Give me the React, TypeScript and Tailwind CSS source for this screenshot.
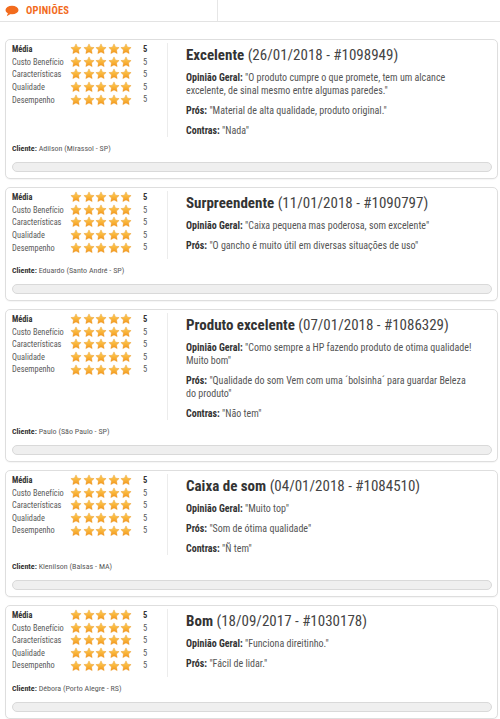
import React from "react";

const FONT = '"Liberation Sans Narrow", "Arial Narrow", "Roboto Condensed", "DejaVu Sans Condensed", "Liberation Sans", sans-serif';

function Star() {
  return (
    <svg width="12" height="12" viewBox="0 0 24 24" className="block">
      <defs>
        <linearGradient id="sg" x1="0" y1="0" x2="0" y2="1">
          <stop offset="0%" stopColor="#ffd45a" />
          <stop offset="100%" stopColor="#f3961c" />
        </linearGradient>
      </defs>
      <path
        d="M12 1.8l3.1 6.5 7.1.9-5.2 4.9 1.3 7.1L12 17.8l-6.3 3.4 1.3-7.1-5.2-4.9 7.1-.9z"
        fill="url(#sg)"
        stroke="#e8901a"
        strokeWidth="0.8"
        strokeLinejoin="round"
      />
    </svg>
  );
}

function Stars() {
  return (
    <div className="flex gap-[0.5px]">
      <Star />
      <Star />
      <Star />
      <Star />
      <Star />
    </div>
  );
}

type Review = {
  title: string;
  meta: string;
  opiniao: React.ReactNode;
  pros: React.ReactNode;
  contras?: React.ReactNode;
  cliente: string;
};

const reviews: Review[] = [
  {
    title: "Excelente",
    meta: "(26/01/2018 - #1098949)",
    opiniao: (
      <>
        "O produto cumpre o que promete, tem um alcance
        <br />
        excelente, de sinal mesmo entre algumas paredes."
      </>
    ),
    pros: <>"Material de alta qualidade, produto original."</>,
    contras: <>"Nada"</>,
    cliente: "Adilson (Mirassol - SP)",
  },
  {
    title: "Surpreendente",
    meta: "(11/01/2018 - #1090797)",
    opiniao: <>"Caixa pequena mas poderosa, som excelente"</>,
    pros: <>"O gancho é muito útil em diversas situações de uso"</>,
    cliente: "Eduardo (Santo André - SP)",
  },
  {
    title: "Produto excelente",
    meta: "(07/01/2018 - #1086329)",
    opiniao: (
      <>
        "Como sempre a HP fazendo produto de otima qualidade!
        <br />
        Muito bom"
      </>
    ),
    pros: (
      <>
        "Qualidade do som Vem com uma ´bolsinha´ para guardar Beleza
        <br />
        do produto"
      </>
    ),
    contras: <>"Não tem"</>,
    cliente: "Paulo (São Paulo - SP)",
  },
  {
    title: "Caixa de som",
    meta: "(04/01/2018 - #1084510)",
    opiniao: <>"Muito top"</>,
    pros: <>"Som de ótima qualidade"</>,
    contras: <>"Ñ tem"</>,
    cliente: "Klenilson (Balsas - MA)",
  },
  {
    title: "Bom",
    meta: "(18/09/2017 - #1030178)",
    opiniao: <>"Funciona direitinho."</>,
    pros: <>"Fácil de lidar."</>,
    cliente: "Débora (Porto Alegre - RS)",
  },
];

const criteria = ["Custo Benefício", "Características", "Qualidade", "Desempenho"];

function Card({ r }: { r: Review }) {
  return (
    <div className="ml-[5px] w-[493px] rounded-[5px] border border-[#dedede] bg-white pt-[3px] pb-[6px] pl-[6px] pr-[4px] shadow-[0_1px_1px_rgba(0,0,0,0.04)]">
      <div className="flex items-stretch">
        <div className="w-[155px] shrink-0 pb-[5px]">
          <div className="flex h-[12.6px] items-center">
            <span className="w-[58px] text-[8.3px] font-bold leading-none text-[#333]">Média</span>
            <Stars />
            <span className="ml-[11px] text-[8.5px] font-bold leading-none text-[#333]">5</span>
          </div>
          {criteria.map((c) => (
            <div key={c} className="flex h-[12.6px] items-center">
              <span className="w-[58px] text-[8.3px] leading-none text-[#5a5a5a]">{c}</span>
              <Stars />
              <span className="ml-[11px] text-[8.5px] leading-none text-[#5a5a5a]">5</span>
            </div>
          ))}
        </div>
        <div className="flex-1 border-l border-[#ececec] pl-[18px] text-[10px] leading-[13px] text-[#555]">
          <div className="mt-[3px] whitespace-nowrap text-[15px] leading-[18px] text-[#444]">
            <span className="font-bold text-[#333]">{r.title}</span> {r.meta}
          </div>
          <p className="mt-[7px] whitespace-nowrap">
            <span className="font-bold text-[#333]">Opinião Geral:</span> {r.opiniao}
          </p>
          <p className="mt-[7px] whitespace-nowrap">
            <span className="font-bold text-[#333]">Prós:</span> {r.pros}
          </p>
          {r.contras && (
            <p className="mt-[7px] whitespace-nowrap">
              <span className="font-bold text-[#333]">Contras:</span> {r.contras}
            </p>
          )}
        </div>
      </div>
      <div className="mt-[7px] text-[8px] leading-[10px] text-[#5a5a5a]">
        <span className="font-bold text-[#333]">Cliente:</span> {r.cliente}
      </div>
      <div className="mt-[8px] mr-[1px] h-[10px] rounded-full border border-[#d9d9d9] bg-[#efefef]" />
    </div>
  );
}

export default function App() {
  return (
    <div className="min-h-[719px] w-[500px] overflow-hidden bg-white" style={{ fontFamily: FONT }}>
      <div className="flex h-[22px] border-b border-[#e3e3e3]">
        <div className="flex w-[218px] items-center border-r border-[#e6e6e6] pl-[5px]">
          <svg width="14" height="12" viewBox="0 0 14 12" className="block">
            <ellipse cx="7" cy="5" rx="6.5" ry="4.3" fill="#f26b1d" />
            <path d="M3 8 L1.8 11.2 L6 8.8 Z" fill="#f26b1d" />
          </svg>
          <span className="ml-[7px] text-[10.5px] font-bold tracking-[0.2px] text-[#f26b1d]">OPINIÕES</span>
        </div>
        <div className="flex-1" />
      </div>
      <div className="mt-[17px] flex flex-col gap-[8px]">
        {reviews.map((r) => (
          <Card key={r.meta} r={r} />
        ))}
      </div>
    </div>
  );
}
